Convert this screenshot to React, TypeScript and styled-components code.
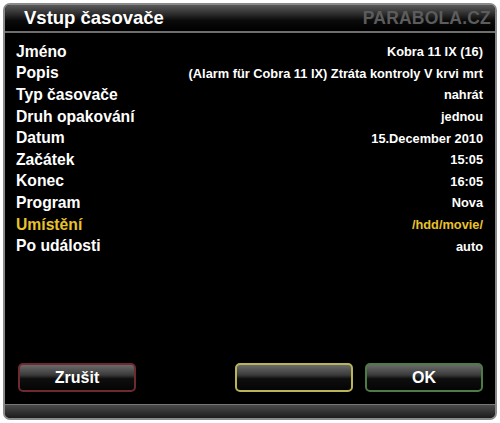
import React from 'react';
import styled, { createGlobalStyle } from 'styled-components';

const GlobalStyle = createGlobalStyle`
    html, body {
        margin: 0;
        padding: 0;
        background: #ffffff;
    }
    body {
        font-family: "Liberation Sans", Arial, sans-serif;
    }
`;

const Page = styled.div`
    width: 500px;
    height: 423px;
    padding: 3px;
    box-sizing: border-box;
`;

const Frame = styled.div`
    height: 100%;
    display: flex;
    flex-direction: column;
    background: #000;
    border: 2px solid #8a8a8a;
    border-radius: 7px;
    overflow: hidden;
    box-sizing: border-box;
`;

const TitleBar = styled.div`
    height: 26px;
    display: flex;
    align-items: center;
    justify-content: space-between;
    padding: 0 4px 0 19px;
    background: linear-gradient(#5a5a5a 0%, #2c2c2c 35%, #0a0a0a 60%, #000 100%);
    border-bottom: 2px solid #6e6e6e;
`;

const Title = styled.span`
    color: #fff;
    font-size: 18.5px;
    font-weight: bold;
`;

const Watermark = styled.span`
    color: #5c5c5c;
    font-size: 17.5px;
    font-weight: bold;
    letter-spacing: 0.2px;
`;

const Body = styled.div`
    flex: 1;
    display: flex;
    flex-direction: column;
    padding: 8px 12px 0 11px;
`;

const List = styled.div`
    display: flex;
    flex-direction: column;
`;

const Row = styled.div`
    height: 21.6px;
    display: flex;
    align-items: center;
    justify-content: space-between;
`;

const Label = styled.span<{ $active?: boolean }>`
    font-size: 15.7px;
    font-weight: bold;
    color: ${p => (p.$active ? '#e8c22c' : '#fff')};
`;

const Value = styled.span<{ $active?: boolean }>`
    font-size: 12.8px;
    font-weight: bold;
    color: ${p => (p.$active ? '#e8c22c' : '#fff')};
`;

const Buttons = styled.div`
    margin-top: auto;
    display: flex;
    justify-content: space-between;
    padding: 0 0 12px 2px;
`;

const Button = styled.div<{ $tone: string }>`
    width: 118px;
    height: 29px;
    box-sizing: border-box;
    border: 2px solid ${p => p.$tone};
    border-radius: 5px;
    display: flex;
    align-items: center;
    justify-content: center;
    background: linear-gradient(#6a6a6a 0%, #3a3a3a 40%, #0e0e0e 55%, #050505 100%);
    color: #fff;
    font-size: 16px;
    font-weight: bold;
`;

const RightButtons = styled.div`
    display: flex;
    gap: 12px;
`;

const BottomBar = styled.div`
    height: 13px;
    border-top: 1px solid #777;
    background: linear-gradient(#4a4a4a, #1c1c1c);
`;

const rows = [
    { label: 'Jméno', value: 'Kobra 11 IX (16)' },
    { label: 'Popis', value: '(Alarm für Cobra 11 IX) Ztráta kontroly V krvi mrt' },
    { label: 'Typ časovače', value: 'nahrát' },
    { label: 'Druh opakování', value: 'jednou' },
    { label: 'Datum', value: '15.December 2010' },
    { label: 'Začátek', value: '15:05' },
    { label: 'Konec', value: '16:05' },
    { label: 'Program', value: 'Nova' },
    { label: 'Umístění', value: '/hdd/movie/', active: true },
    { label: 'Po události', value: 'auto' },
];

function App() {
    return (
        <Page>
            <GlobalStyle />
            <Frame>
                <TitleBar>
                    <Title>Vstup časovače</Title>
                    <Watermark>PARABOLA.CZ</Watermark>
                </TitleBar>
                <Body>
                    <List>
                        {rows.map(r => (
                            <Row key={r.label}>
                                <Label $active={r.active}>{r.label}</Label>
                                <Value $active={r.active}>{r.value}</Value>
                            </Row>
                        ))}
                    </List>
                    <Buttons>
                        <Button $tone="#6e2a30">Zrušit</Button>
                        <RightButtons>
                            <Button $tone="#b8b45a"></Button>
                            <Button $tone="#4e7a48">OK</Button>
                        </RightButtons>
                    </Buttons>
                </Body>
                <BottomBar />
            </Frame>
        </Page>
    );
}

export default App;
